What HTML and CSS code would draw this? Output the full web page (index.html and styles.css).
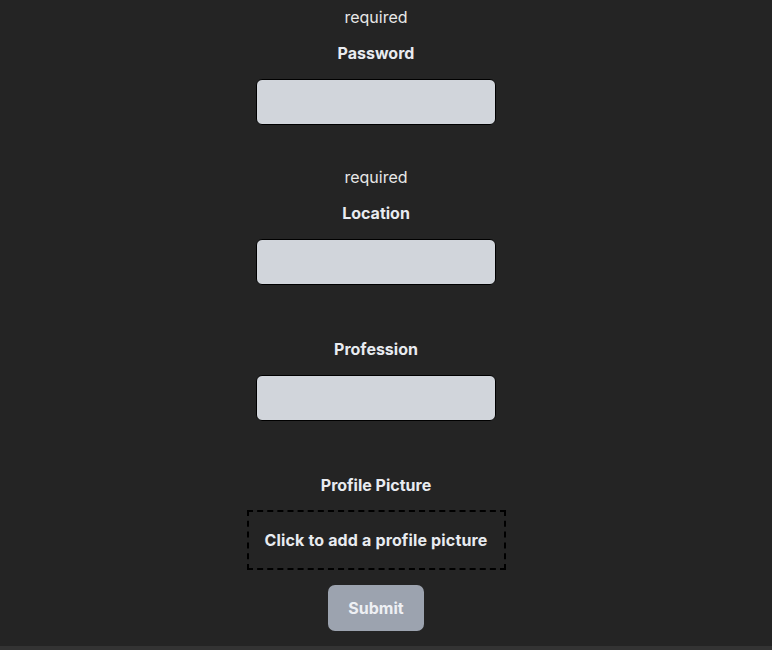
FILE: index.html
```html
<!DOCTYPE html>
<html lang="en">
<head>
<meta charset="utf-8">
<title>Sign up</title>
<link rel="stylesheet" href="styles.css">
</head>
<body>
<div class="page">
  <form class="form">
    <div class="error error-top">required</div>
    <div class="field">
      <label class="label">Password</label>
      <input class="input" type="password">
      <div class="error">required</div>
    </div>
    <div class="field">
      <label class="label">Location</label>
      <input class="input" type="text">
    </div>
    <div class="field">
      <label class="label">Profession</label>
      <input class="input" type="text">
    </div>
    <div class="field field-last">
      <label class="label">Profile Picture</label>
      <div class="dropzone">Click to add a profile picture</div>
    </div>
    <button class="submit" type="button">Submit</button>
  </form>
</div>
<div class="bottom-bar"></div>
</body>
</html>
```
FILE: styles.css
```css
html, body {
  margin: 0;
  padding: 0;
  background: #242424;
  font-family: Inter, "Noto Sans", sans-serif;
  color: #e5e7eb;
}
.page {
  height: 646px;
  overflow: hidden;
  width: 752px;
}
.form {
  display: flex;
  flex-direction: column;
  align-items: center;
  padding-top: 5px;
}
.error {
  font-size: 16px;
  line-height: 24px;
  color: #e8e8e8;
}
.error-top {
  margin-bottom: 12px;
}
.field {
  display: flex;
  flex-direction: column;
  align-items: center;
  padding-bottom: 12px;
}
.label {
  font-size: 16px;
  font-weight: 700;
  line-height: 24px;
  color: #e8ebf0;
}
.input {
  margin-top: 14px;
  margin-bottom: 40px;
  width: 240px;
  height: 46px;
  box-sizing: border-box;
  background: #d1d5db;
  border: 1px solid #000;
  border-radius: 6px;
  padding: 0 10px;
  font-size: 15px;
}
.dropzone {
  margin-top: 13px;
  width: 259px;
  height: 60px;
  box-sizing: border-box;
  border: 2px dashed #000;
  display: flex;
  align-items: center;
  justify-content: center;
  font-size: 16px;
  font-weight: 700;
  letter-spacing: 0.15px;
  color: #e8ebf0;
}
.field-last {
  padding-bottom: 0;
}
.submit {
  margin-top: 15px;
  width: 96px;
  height: 46px;
  background: #9ca3af;
  border: none;
  border-radius: 7px;
  font-family: Inter, "Noto Sans", sans-serif;
  font-size: 16px;
  font-weight: 700;
  color: #eef0f4;
}
.bottom-bar {
  height: 4px;
  background: #333333;
}
```
